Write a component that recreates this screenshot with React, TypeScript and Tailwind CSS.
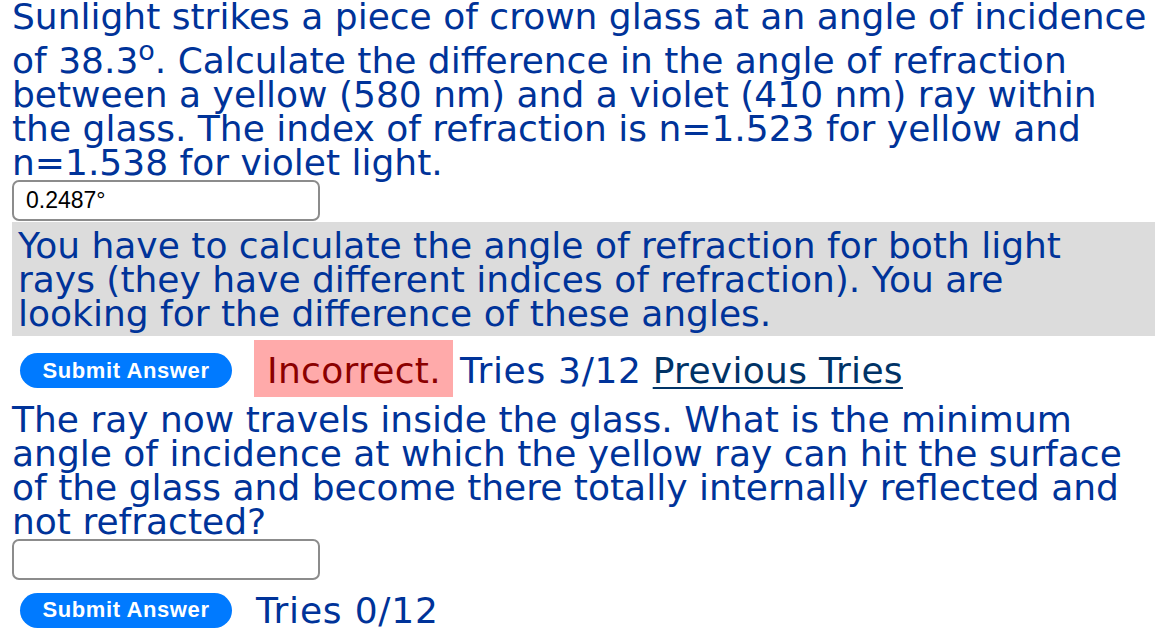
import React from "react";

const btn =
  "flex items-center justify-center w-[212px] h-[35px] rounded-full bg-[#007aff] text-white font-['Liberation_Sans',Arial,sans-serif] font-bold text-[22px] tracking-[0.6px] leading-none";

const field =
  "block w-[308px] h-[41px] border-2 border-[#8c8c8c] rounded-[7px] bg-white pl-[12px] text-[23px] leading-normal text-black font-['Liberation_Sans',Arial,sans-serif] outline-none";

export default function App() {
  return (
    <div className="w-[1155px] h-[629px] overflow-hidden bg-white pl-[12px] font-['DejaVu_Sans',Verdana,sans-serif] text-[36px] leading-[34px] text-[#003399]">
      <p className="pt-0">
        Sunlight strikes a piece of crown glass at an angle of incidence of 38.3
        <sup className="static align-super text-[27px] leading-[33px]">o</sup>. Calculate the
        difference in the angle of refraction between a yellow (580 nm) and a violet (410 nm) ray
        within the glass. The index of refraction is n=1.523 for yellow and n=1.538 for violet
        light.
      </p>
      <input className={field} readOnly value="0.2487°" />
      <div className="mt-[1px] bg-[#dcdcdc] pt-[6.5px] pb-[5.5px] pl-[6px] pr-[12px]">
        You have to calculate the angle of refraction for both light rays (they have different
        indices of refraction). You are looking for the difference of these angles.
      </div>
      <div className="mt-[4px] flex items-start h-[57px]">
        <button className={`${btn} ml-[8px] mt-[13px]`}>Submit Answer</button>
        <div className="ml-[22px] h-[57px] w-[199px] bg-[#ffaaaa] pl-[13px] pt-[13.5px] tracking-[0.3px] text-[#8b0000]">
          Incorrect.
        </div>
        <span className="ml-[7px] pt-[13.5px] tracking-[0.7px]">Tries 3/12</span>
        <span className="ml-[11px] pt-[13.5px] tracking-[0.3px] text-[#003366] underline decoration-[2px] underline-offset-[4px]">
          Previous Tries
        </span>
      </div>
      <p className="mt-[5.5px]">
        The ray now travels inside the glass. What is the minimum angle of incidence at which the
        yellow ray can hit the surface of the glass and become there totally internally reflected
        and not refracted?
      </p>
      <input className={field} readOnly value="" />
      <div className="mt-[13px] flex items-start">
        <button className={`${btn} ml-[8px]`}>Submit Answer</button>
        <span className="ml-[24px] mt-[1.5px] tracking-[0.8px]">Tries 0/12</span>
      </div>
    </div>
  );
}
